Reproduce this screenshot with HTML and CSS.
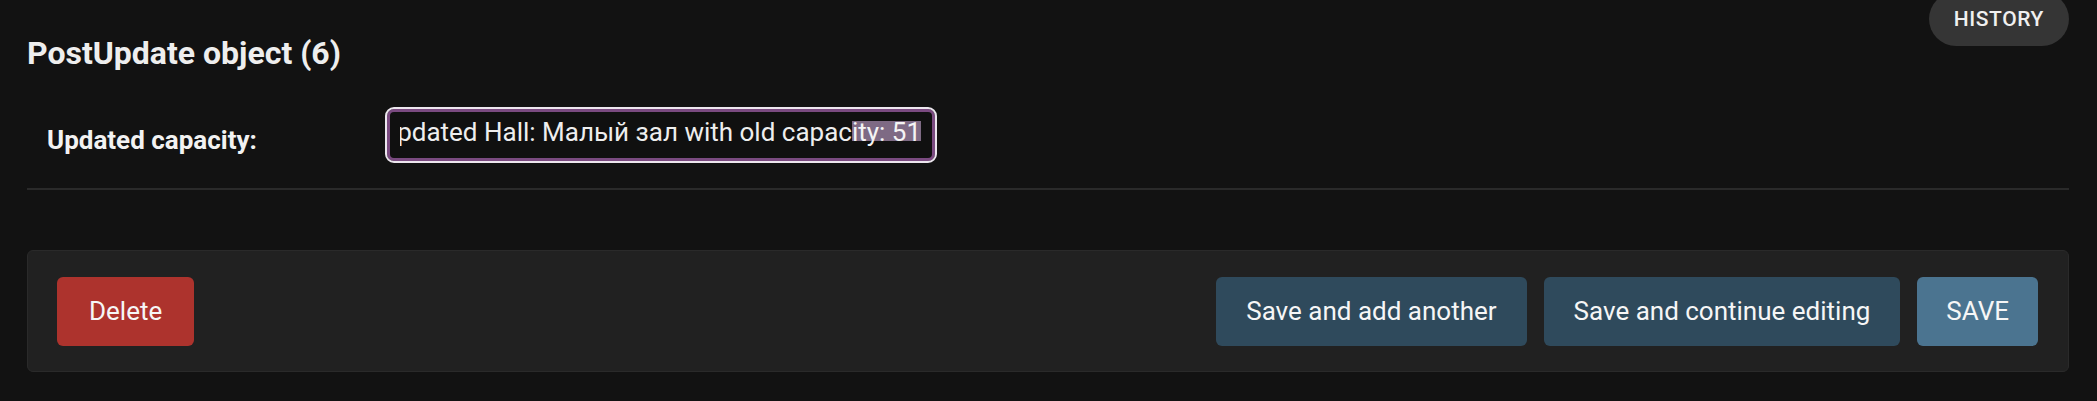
FILE: index.html
```html
<!DOCTYPE html>
<html lang="en">
<head>
<meta charset="utf-8">
<title>PostUpdate object (6)</title>
<link rel="stylesheet" href="styles.css">
</head>
<body>
<div class="content">
  <div class="header">
    <h1 class="title">PostUpdate object (6)</h1>
    <a class="history" href="#">HISTORY</a>
  </div>
  <div class="form-row">
    <label class="label">Updated capacity:</label>
    <div class="input">
      <div class="input-clip">
        <span class="value">Updated Hall: Малый зал with old capac<span class="sel">ity: 51</span></span>
      </div>
    </div>
  </div>
  <div class="submit-row">
    <a class="btn btn-delete" href="#">Delete</a>
    <div class="spacer"></div>
    <a class="btn btn-secondary" href="#">Save and add another</a>
    <a class="btn btn-secondary" href="#">Save and continue editing</a>
    <a class="btn btn-primary" href="#">SAVE</a>
  </div>
</div>
</body>
</html>
```
FILE: styles.css
```css
html, body {
  margin: 0;
  padding: 0;
  background: #121212;
  color: #eeeeee;
  font-family: Roboto, "Noto Sans", "Liberation Sans", sans-serif;
}

.content {
  padding: 0 28px 0 27px;
}

.header {
  display: flex;
  justify-content: space-between;
  align-items: flex-start;
}

.title {
  margin: 33px 0 0 0;
  font-size: 32px;
  line-height: 40px;
  font-weight: 700;
  color: #eeeeee;
}

.history {
  display: block;
  margin-top: -8px;
  height: 54px;
  line-height: 54px;
  padding: 0 25px;
  border-radius: 27px;
  background: #353535;
  color: #f0f0f0;
  font-size: 21px;
  font-weight: 500;
  letter-spacing: 0.6px;
  text-decoration: none;
}

.form-row {
  display: flex;
  align-items: flex-start;
  padding: 34px 0 25px 20px;
  border-bottom: 2px solid #2a2a2a;
}

.label {
  flex: none;
  width: 338px;
  margin-top: 18px;
  font-size: 26px;
  line-height: 30px;
  font-weight: 700;
  color: #f2f2f2;
}

.input {
  box-sizing: border-box;
  width: 552px;
  height: 56px;
  border: 2px solid #ece6ee;
  border-radius: 9px;
  box-shadow: inset 0 0 0 3px #7a4a80;
  background: #101010;
  padding: 0 14px 7px 13px;
  display: flex;
  align-items: center;
}

.input-clip {
  flex: 1;
  overflow: hidden;
  display: flex;
  justify-content: flex-end;
  white-space: nowrap;
}

.value {
  flex: none;
  font-size: 26px;
  color: #eeeeee;
}

.sel {
  display: inline-block;
  height: 20px;
  line-height: 22px;
  background: #7e6a84;
  color: #f4f4f4;
}

.submit-row {
  display: flex;
  align-items: center;
  gap: 17px;
  margin-top: 60px;
  padding: 26px 30px 25px 29px;
  background: #212121;
  border: 1px solid #2a2a2a;
  border-radius: 6px;
}

.spacer {
  flex: 1;
}

.btn {
  display: block;
  height: 69px;
  line-height: 69px;
  padding: 0 30px;
  border-radius: 6px;
  font-size: 26px;
  color: #f6f6f6;
  text-decoration: none;
  white-space: nowrap;
}

.btn-delete {
  background: #ad332d;
  padding: 0 32px;
}

.btn-secondary {
  background: #2f4a5c;
}

.btn-primary {
  background: #4b7490;
  padding: 0 29px;
}
```
